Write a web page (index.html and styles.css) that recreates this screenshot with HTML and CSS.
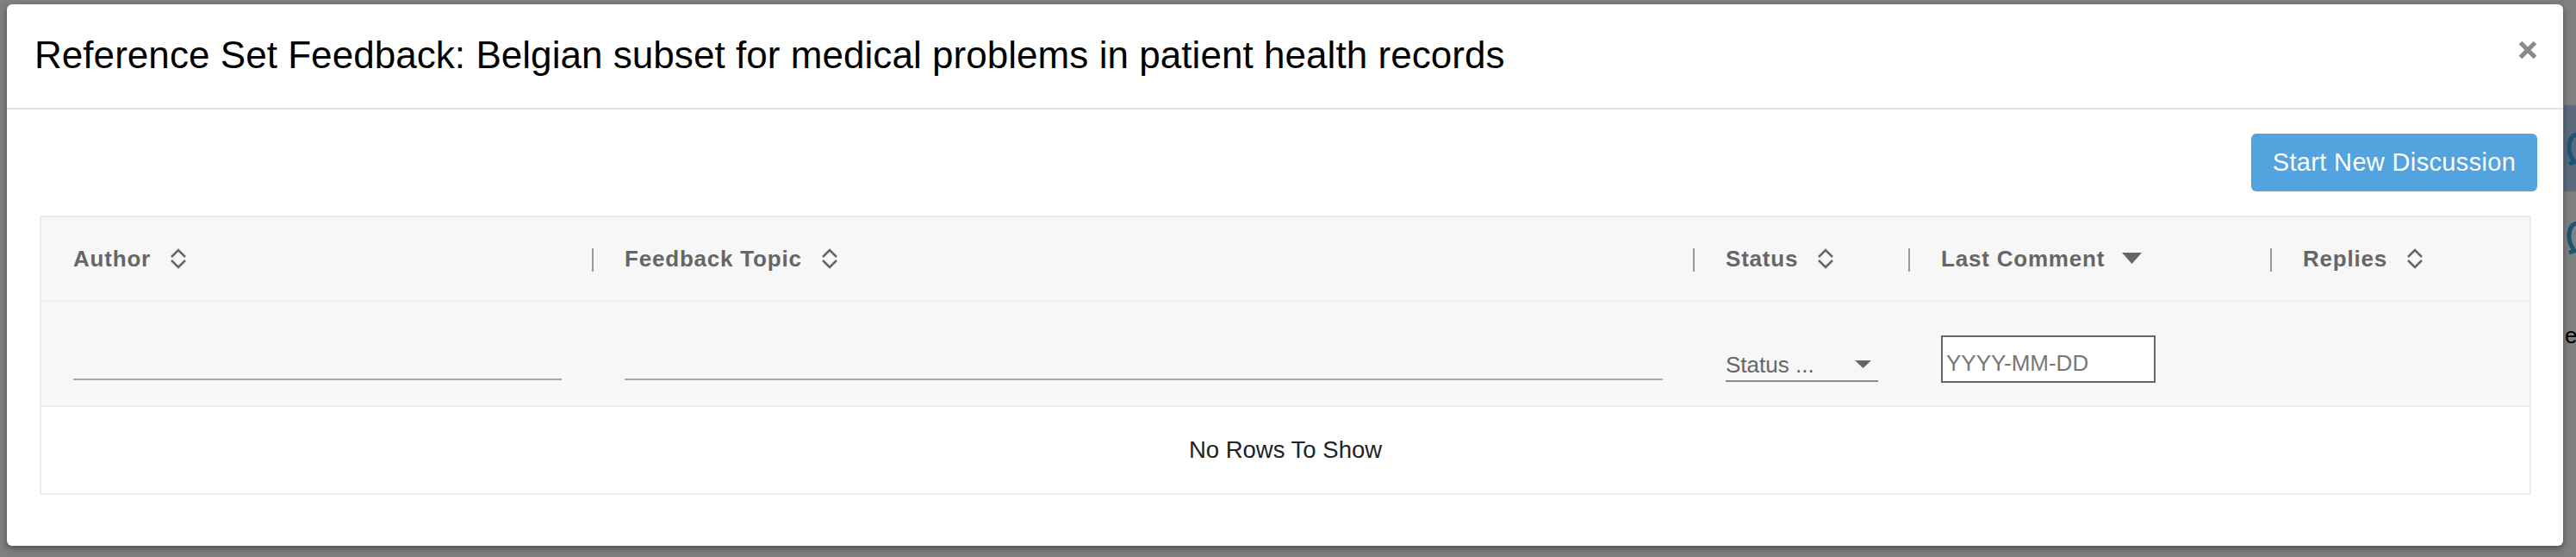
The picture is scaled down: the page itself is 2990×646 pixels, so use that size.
FILE: index.html
```html
<!DOCTYPE html>
<html lang="en">
<head>
<meta charset="utf-8">
<title>Reference Set Feedback</title>
<link rel="stylesheet" href="styles.css">
</head>
<body>
<div class="page-behind">
  <div class="behind-band">
    <svg class="behind-icon" width="14" height="44" viewBox="0 0 14 44"><path d="M14 4 C6 4 4 12 4 20 C4 28 8 32 10 36 L4 38" stroke="#1d5578" stroke-width="5" fill="none"/></svg>
  </div>
  <svg class="behind-icon i2" width="14" height="44" viewBox="0 0 14 44"><path d="M14 4 C6 4 4 12 4 20 C4 28 8 32 10 36 L4 38" stroke="#1d5578" stroke-width="5" fill="none"/></svg>
  <span class="behind-text">e</span>
</div>
<div class="modal">
  <header class="modal-header">
    <h1 class="modal-title">Reference Set Feedback: Belgian subset for medical problems in patient health records</h1>
    <button class="close-btn" aria-label="Close">
      <svg width="22" height="22" viewBox="0 0 22 22"><path d="M2.5 2.5 L19.5 19.5 M19.5 2.5 L2.5 19.5" stroke="#8a8a8a" stroke-width="5.2" fill="none"/></svg>
    </button>
  </header>
  <div class="modal-body">
    <div class="toolbar">
      <button class="btn-primary">Start New Discussion</button>
    </div>
    <div class="grid">
      <div class="row head">
        <div class="hcell first"><span>Author</span>
          <svg class="sort" width="20" height="26" viewBox="0 0 20 26"><path d="M2 11 L10 3 L18 11 M2 15 L10 23 L18 15" stroke="#666" stroke-width="2.6" fill="none"/></svg>
        </div>
        <div class="hcell"><span>Feedback Topic</span>
          <svg class="sort" width="20" height="26" viewBox="0 0 20 26"><path d="M2 11 L10 3 L18 11 M2 15 L10 23 L18 15" stroke="#666" stroke-width="2.6" fill="none"/></svg>
        </div>
        <div class="hcell"><span>Status</span>
          <svg class="sort" width="20" height="26" viewBox="0 0 20 26"><path d="M2 11 L10 3 L18 11 M2 15 L10 23 L18 15" stroke="#666" stroke-width="2.6" fill="none"/></svg>
        </div>
        <div class="hcell"><span>Last Comment</span>
          <svg class="sort-down" width="23" height="13" viewBox="0 0 23 13"><path d="M0 0 L23 0 L11.5 13 Z" fill="#666"/></svg>
        </div>
        <div class="hcell"><span>Replies</span>
          <svg class="sort" width="20" height="26" viewBox="0 0 20 26"><path d="M2 11 L10 3 L18 11 M2 15 L10 23 L18 15" stroke="#666" stroke-width="2.6" fill="none"/></svg>
        </div>
      </div>
      <div class="row filters">
        <div class="fcell first"><input class="text-filter" type="text"></div>
        <div class="fcell"><input class="text-filter" type="text"></div>
        <div class="fcell">
          <div class="select-filter"><span>Status ...</span>
            <svg width="19" height="9" viewBox="0 0 19 9"><path d="M0 0 L19 0 L9.5 9 Z" fill="#666"/></svg>
          </div>
        </div>
        <div class="fcell"><input class="date-filter" type="text" placeholder="YYYY-MM-DD"></div>
        <div class="fcell"></div>
      </div>
      <div class="row empty">No Rows To Show</div>
    </div>
  </div>
</div>
</body>
</html>
```

FILE: styles.css
```css
* { box-sizing: border-box; }

html, body {
  margin: 0;
  padding: 0;
}

body {
  width: 2990px;
  height: 646px;
  overflow: hidden;
  background: #808080;
  font-family: "Liberation Sans", Arial, Helvetica, sans-serif;
  position: relative;
  display: flex;
  align-items: flex-start;
  padding: 5px 0 0 8px;
}

/* fragments of the page that lies under the dimmed overlay */
.page-behind {
  position: absolute;
  top: 0;
  right: 0;
  width: 14px;
  height: 646px;
}
.behind-band {
  position: absolute;
  top: 122px;
  left: 0;
  width: 14px;
  height: 100px;
  background: #5b6b7d;
}
.behind-icon {
  position: absolute;
  top: 30px;
  left: 2px;
  display: block;
}
.behind-icon.i2 {
  top: 255px;
}
.behind-text {
  position: absolute;
  top: 374px;
  left: 1px;
  font-size: 26px;
  line-height: 30px;
  color: #000;
}

.modal {
  position: relative;
  z-index: 1;
  width: 2967px;
  height: 628px;
  background: #fff;
  border-radius: 6px;
  box-shadow: 0 3px 8px rgba(0, 0, 0, 0.4);
  display: flex;
  flex-direction: column;
}

.modal-header {
  height: 122px;
  border-bottom: 2px solid #dfe3e7;
  display: flex;
  align-items: center;
  justify-content: space-between;
  padding: 0 30px 0 32px;
}

.modal-title {
  margin: 0;
  font-weight: normal;
  font-size: 44px;
  color: #000;
  line-height: 50px;
  margin-top: -2px;
  letter-spacing: 0.05px;
}

.close-btn {
  align-self: flex-start;
  margin-top: 42px;
  border: 0;
  padding: 0;
  background: transparent;
  width: 22px;
  height: 22px;
  display: block;
}
.close-btn svg { display: block; }

.modal-body {
  padding: 28px 30px 0 38px;
  display: flex;
  flex-direction: column;
}

.toolbar {
  display: flex;
  justify-content: flex-end;
  margin-bottom: 28px;
}

.btn-primary {
  width: 332px;
  height: 67px;
  border: 0;
  border-radius: 6px;
  background: #52a3de;
  color: #fff;
  font-family: "Liberation Sans", Arial, Helvetica, sans-serif;
  font-size: 29px;
  letter-spacing: 0.35px;
  padding: 0;
}

.grid {
  margin-right: 7px;
  border: 2px solid #ededed;
  display: flex;
  flex-direction: column;
}

.row {
  display: grid;
  grid-template-columns: 639px 1278px 250px 420px 1fr;
}

.head {
  height: 98px;
  background: #f7f7f7;
  border-bottom: 2px solid #ededed;
}

.hcell {
  position: relative;
  display: flex;
  align-items: center;
  padding-left: 38px;
  font-size: 26px;
  font-weight: bold;
  letter-spacing: 0.8px;
  color: #666;
}
.hcell.first { padding-left: 37px; }
.hcell span { line-height: 30px; }

.hcell:not(.first)::before {
  content: "";
  position: absolute;
  left: 0;
  top: 36px;
  width: 2px;
  height: 27px;
  background: #999;
}

.sort {
  margin-left: 22px;
  display: block;
}
.sort-down {
  margin-left: 20px;
  margin-top: -2px;
  display: block;
}

.filters {
  height: 122px;
  background: #f7f7f7;
  border-bottom: 2px solid #ededed;
}

.fcell {
  display: flex;
  align-items: flex-end;
  padding: 0 35px 27px 38px;
}
.fcell.first { padding-left: 37px; }

.text-filter {
  width: 100%;
  height: 40px;
  margin-bottom: 2px;
  border: 0;
  border-bottom: 2px solid #a8a8a8;
  background: transparent;
  outline: none;
  font-family: inherit;
  font-size: 26px;
}

.select-filter {
  width: 178px;
  height: 34px;
  border-bottom: 2px solid #8a8a8a;
  display: flex;
  align-items: center;
  justify-content: space-between;
  padding: 0 8px 4px 0;
  font-size: 26px;
  line-height: 30px;
  color: #666;
}
.select-filter svg { display: block; margin-bottom: 2px; }

.date-filter {
  width: 249px;
  height: 55px;
  margin-bottom: -1px;
  border: 2px solid #666;
  background: #fff;
  padding: 9px 0 0 4px;
  font-family: inherit;
  font-size: 26px;
  color: #333;
  outline: none;
}
.date-filter::placeholder { color: #777; }

.empty {
  display: flex;
  align-items: center;
  justify-content: center;
  height: 100px;
  background: #fff;
  font-size: 27.5px;
  color: #222;
}
```
